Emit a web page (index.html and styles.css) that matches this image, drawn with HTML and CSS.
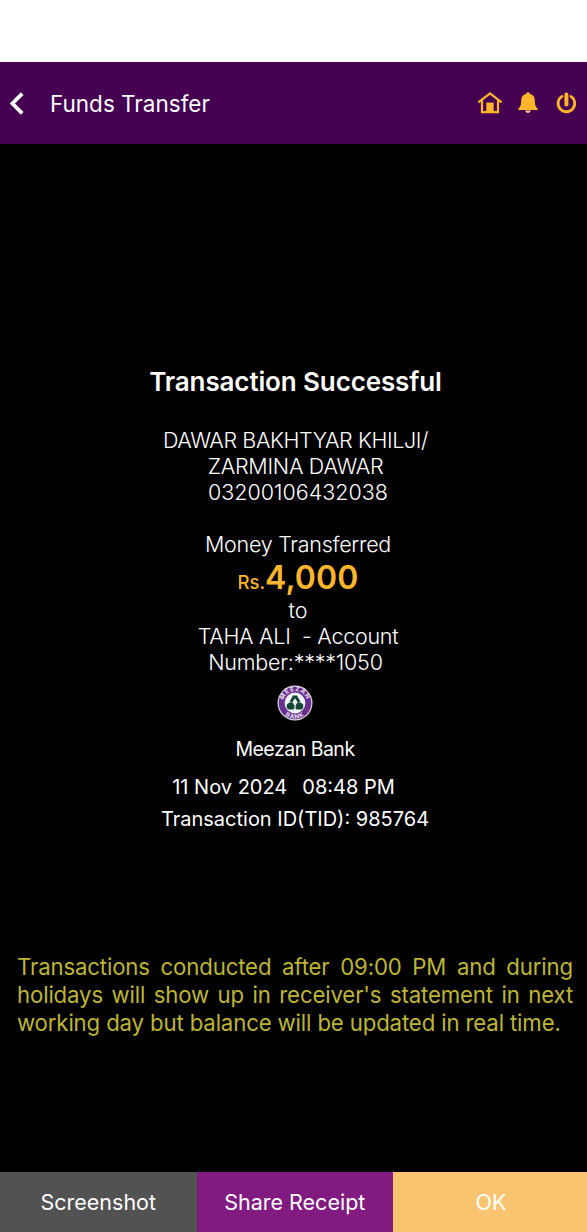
FILE: index.html
```
<!DOCTYPE html>
<html lang="en">
<head>
<meta charset="utf-8">
<title>Funds Transfer</title>
<link rel="stylesheet" href="styles.css">
</head>
<body>
<div class="screen">
  <div class="status-bar"></div>
  <header class="header">
    <svg class="back" viewBox="0 0 16 24" width="16" height="24"><path d="M14.200 1.700 4.400 11.500l9.800 9.800" /></svg>
    <h1 class="header-title">Funds Transfer</h1>
    <div class="header-icons">
      <svg class="icon" viewBox="0 0 26 24" width="26" height="24"><path class="stroke" d="M1.400 11.400 13 2.400l11.600 9M5 9.600v11.600h16V9.600"/><path class="fill" d="M9.300 11.600h7.400v9.600H9.300z"/></svg>
      <svg class="icon" viewBox="0 0 22 24" width="22" height="24"><path class="fill" d="M10 1.200c1 0 1.700.7 1.700 1.500 3.300.8 5.100 3.200 5.100 6.500 0 4.400.7 6.700 2.800 8.400v1.400H.400v-1.400c2.100-1.700 2.800-4 2.800-8.400 0-3.300 1.800-5.700 5.100-6.500 0-.8.7-1.500 1.700-1.500z"/><path class="clapper" d="M7.200 19.600h5.600c-.3 1.500-1.300 2.300-2.800 2.300S7.500 21.100 7.200 19.600z"/></svg>
      <svg class="icon" viewBox="0 0 22 24" width="22" height="24"><path class="power" d="M7 5.400a8.300 8.300 0 1 0 8.800 0"/><path class="power-bar" d="M11.400 3.400v10"/></svg>
    </div>
  </header>
  <main class="receipt">
    <h2 class="result">Transaction Successful</h2>
    <div class="details">
      <p class="name-1">DAWAR BAKHTYAR KHILJI/</p>
      <p class="name-2">ZARMINA DAWAR</p>
      <p class="acct shifted">03200106432038</p>
      <p class="label shifted">Money Transferred</p>
      <p class="amount shifted"><span class="currency">Rs.</span><span class="value">4,000</span></p>
      <p class="to shifted">to</p>
      <p class="payee shifted">TAHA ALI&nbsp; - Account</p>
      <p class="number">Number:****1050</p>
    </div>
    <svg class="bank-logo" viewBox="0 0 36 36" width="36" height="36">
      <defs><path id="arc-top" d="M6 18a12 12 0 0 1 24 0"/><path id="arc-bottom" d="M2.200 18a15.800 15.800 0 0 0 31.600 0"/></defs>
      <circle class="logo-rim" cx="18" cy="18" r="17.500"/>
      <circle class="logo-ring" cx="18" cy="18" r="16.300"/>
      <circle class="logo-core" cx="18" cy="18" r="10.400"/>
      <text class="logo-text"><textPath href="#arc-top" startOffset="50%">MEEZAN</textPath></text>
      <text class="logo-text"><textPath href="#arc-bottom" startOffset="50%">BANK</textPath></text>
      <path class="logo-mark" d="M16 10.400h4l3.400 6.200-2.600.8L18 13.200l-2.800 4.200-2.600-.8zM12.400 17.600h3.200l1.800 2.600v3.200l-1 1h-5l-1.600-1.600v-3.200zM23.600 17.600h-3.200l-1.800 2.600v3.200l1 1h5l1.600-1.600v-3.200z"/>
    </svg>
    <p class="bank">Meezan Bank</p>
    <p class="date"><span>11 Nov 2024</span><span>08:48 PM</span></p>
    <p class="tid">Transaction ID(TID): 985764</p>
    <p class="note">Transactions conducted after 09:00 PM and during holidays will show up in receiver's statement in next working day but balance will be updated in real time.</p>
  </main>
  <footer class="actions">
    <button class="action screenshot">Screenshot</button>
    <button class="action share">Share Receipt</button>
    <button class="action ok">OK</button>
  </footer>
</div>
</body>
</html>
```
FILE: styles.css
```
* { box-sizing: border-box; }
body { margin: 0; background: #000; font-family: Inter, "Liberation Sans", sans-serif; color: #fff; }
h1, h2, p { margin: 0; white-space: nowrap; }
.screen { width: 587px; height: 1232px; display: flex; flex-direction: column; }
.status-bar { height: 62px; background: #fff; }
.header { height: 82px; background: #450051; display: flex; align-items: center; padding: 1px 10px 0 8px; }
.back { fill: none; stroke: #fff; stroke-width: 3.800; }
.header-title { margin-left: 26px; font-size: 22.500px; font-weight: 400; line-height: 30px; }
.header-icons { margin: 0 0 1px auto; display: flex; gap: 15px; }
.icon { display: block; }
.fill { fill: #fdb52b; }
.clapper { fill: #f9c98c; }
.stroke { fill: none; stroke: #fdb52b; stroke-width: 2.200; }
.power { fill: none; stroke: #fdb52b; stroke-width: 2.800; stroke-linecap: round; }
.power-bar { stroke: #fdb52b; stroke-width: 4; stroke-linecap: round; }
.receipt { flex: 1; display: flex; flex-direction: column; align-items: center; padding: 218px 0 0 4px; }
.result { height: 40px; line-height: 40px; font-size: 26px; font-weight: 600; letter-spacing: -.12px; }
.details { margin-top: 25px; display: flex; flex-direction: column; align-items: center; font-size: 21.500px; font-weight: 300; line-height: 26px; }
.name-1 { letter-spacing: -.4px; }
.name-2 { letter-spacing: -.27px; }
.shifted { padding-left: 5px; }
.label { margin-top: 26px; letter-spacing: -.27px; }
.amount { display: flex; align-items: baseline; height: 40px; line-height: 42px; color: #fdb52b; }
.currency { font-size: 18.500px; font-weight: 500; }
.value { font-size: 32px; font-weight: 600; letter-spacing: .1px; }
.payee { letter-spacing: -.27px; }
.number { letter-spacing: -.22px; }
.bank-logo { margin: 10px 2px 0 0; display: block; }
.logo-rim { fill: #d9d9dd; }
.logo-ring { fill: #67308f; }
.logo-core { fill: #eef2f0; }
.logo-mark { fill: #17453a; }
.logo-text { font: 700 6.200px Inter, sans-serif; fill: #e8dcef; text-anchor: middle; letter-spacing: .8px; }
.bank { margin-top: 15px; padding-right: 1px; font-size: 19.500px; line-height: 26px; letter-spacing: -.5px; }
.date { display: flex; gap: 15px; margin-top: 12px; padding-right: 24px; font-size: 20px; line-height: 26px; }
.tid { margin-top: 6px; padding-right: 1px; font-size: 20px; line-height: 26px; }
.note { width: 556px; margin: 121px 1px 0 0; font-size: 22.200px; font-weight: 400; line-height: 27.750px; letter-spacing: -.14px; color: #bdb534; white-space: normal; text-align: justify; }
.actions { height: 60px; display: grid; grid-template-columns: 196.500px 196.500px 1fr; }
.action { border: 0; padding: 0; color: #fff; font: 400 21.500px/30px Inter, sans-serif; }
.screenshot { background: #525252; }
.share { background: #821b80; }
.ok { background: #f9c46f; padding-left: 2px; }
```
